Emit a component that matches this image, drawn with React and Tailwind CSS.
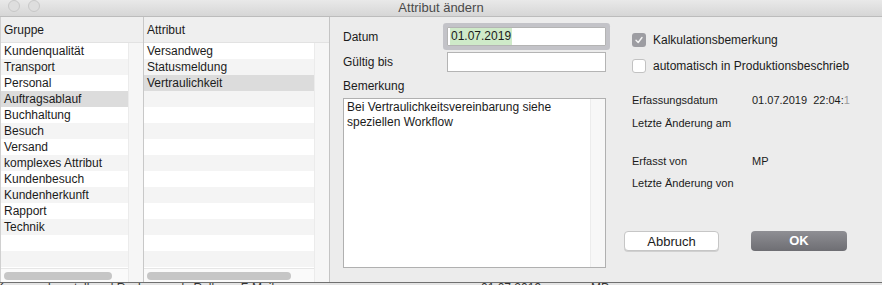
import React from "react";

const groups = [
  "Kundenqualität",
  "Transport",
  "Personal",
  "Auftragsablauf",
  "Buchhaltung",
  "Besuch",
  "Versand",
  "komplexes Attribut",
  "Kundenbesuch",
  "Kundenherkunft",
  "Rapport",
  "Technik",
  "",
  "",
  "",
];
const attrs = ["Versandweg", "Statusmeldung", "Vertraulichkeit", "", "", "", "", "", "", "", "", "", "", "", ""];

function Rows({ items, selected }) {
  return (
    <div className="flex-1 overflow-hidden">
      {items.map((t, i) => (
        <div
          key={i}
          className={
            "h-[16px] leading-[16px] pl-[3px] whitespace-nowrap " +
            (i === selected ? "bg-[#dcdcdc]" : i % 2 === 0 ? "bg-white" : "bg-[#f4f4f4]")
          }
        >
          {t}
        </div>
      ))}
    </div>
  );
}

function Gutter() {
  return <div className="w-[15px] bg-[#f6f6f6] border-l border-[#ebebeb]" />;
}

function HScroll({ thumb }) {
  return (
    <div className="h-[14px] bg-[#fafafa] border-t border-[#e6e6e6] pt-[3px] pl-[3px]">
      <div className={"h-[8px] rounded-full bg-[#c6c6c6] " + thumb} />
    </div>
  );
}

function Header({ children }) {
  return (
    <div className="h-[26px] flex items-center pl-[3px] pt-[1px] bg-[#efefef] border-b border-[#e2e2e2]">
      {children}
    </div>
  );
}

function InfoRow({ label, value, className }) {
  return (
    <div className={"flex h-[16px] items-center pl-[8px] text-[11px] " + className}>
      <div className="w-[120px]">{label}</div>
      <div className="whitespace-pre">{value}</div>
    </div>
  );
}

export default function App() {
  return (
    <div className="w-[882px] h-[285px] overflow-hidden bg-[#ececec] text-[12px] text-[#1b1b1b] font-['Liberation_Sans',Arial,sans-serif]">
      {/* Title bar */}
      <div className="h-[17px] flex items-start bg-linear-to-b from-[#e9e9e9] to-[#d6d6d6] border-b border-[#bcbcbc]">
        <div className="w-[60px] flex gap-[8px] pl-[8px]">
          <div className="w-[12px] h-[12px] rounded-full bg-[#dedede] border border-[#c8c8c8]" />
          <div className="w-[12px] h-[12px] rounded-full bg-[#dedede] border border-[#c8c8c8]" />
        </div>
        <div className="flex-1 text-center text-[13px] leading-[15px] text-[#4a4a4a]">Attribut ändern</div>
        <div className="w-[60px]" />
      </div>

      {/* Body */}
      <div className="h-[265px] flex">
        {/* Gruppe */}
        <div className="w-[144px] flex flex-col border-r border-[#c8c8c8] border-l border-l-[#d0d0d0]">
          <Header>Gruppe</Header>
          <div className="flex-1 flex min-h-0">
            <div className="flex-1 flex flex-col min-h-0">
              <Rows items={groups} selected={3} />
              <HScroll thumb="w-[108px]" />
            </div>
            <Gutter />
          </div>
        </div>

        {/* Attribut */}
        <div className="w-[186px] flex flex-col border-r border-[#c4c4c4]">
          <Header>Attribut</Header>
          <div className="flex-1 flex min-h-0">
            <div className="flex-1 flex flex-col min-h-0">
              <Rows items={attrs} selected={2} />
              <HScroll thumb="w-[144px]" />
            </div>
            <Gutter />
          </div>
        </div>

        {/* Form */}
        <div className="flex-1 flex pl-[13px]">
          <div className="w-[263px] flex flex-col">
            <div className="flex items-center h-[19px] mt-[10px]">
              <div className="w-[104px]">Datum</div>
              <div className="w-[159px] h-[19px] bg-white border border-[#b4b4b4] shadow-[0_0_0_4px_#c3c3c8] rounded-[1px] flex items-center pl-[2px]">
                <span className="bg-[#cfeac9] px-[1px] leading-[17px]">01.07.2019</span>
              </div>
            </div>
            <div className="flex items-center h-[20px] mt-[6px]">
              <div className="w-[104px]">Gültig bis</div>
              <div className="w-[159px] h-[20px] bg-white border border-[#b4b4b4]" />
            </div>
            <div className="h-[16px] leading-[16px] mt-[6px]">Bemerkung</div>
            <div className="mt-[4px] h-[170px] bg-white border border-[#b0b0b0] flex">
              <div className="flex-1 pl-[3px] pt-[1px] leading-[15px]">
                Bei Vertraulichkeitsvereinbarung siehe
                <br />
                speziellen Workflow
              </div>
              <div className="w-[15px] bg-[#f7f7f7] border-l border-[#ececec]" />
            </div>
          </div>

          <div className="ml-[18px] flex flex-col">
            <div className="flex items-center h-[14px] mt-[16px] pl-[8px] gap-[7px]">
              <div className="w-[14px] h-[14px] rounded-[3px] bg-[#9d9da2] flex items-center justify-center">
                <svg width="10" height="10" viewBox="0 0 10 10">
                  <path d="M2 5.2 L4.2 7.5 L8 2.5" fill="none" stroke="#f4f4f4" strokeWidth="1.4" strokeLinecap="round" strokeLinejoin="round" />
                </svg>
              </div>
              <span>Kalkulationsbemerkung</span>
            </div>
            <div className="flex items-center h-[14px] mt-[12px] pl-[8px] gap-[7px]">
              <div className="w-[14px] h-[14px] rounded-[3px] bg-white border border-[#c2c2c2]" />
              <span>automatisch in Produktionsbeschrieb</span>
            </div>
            <InfoRow
              className="mt-[19px]"
              label="Erfassungsdatum"
              value={
                <>
                  01.07.2019  22:04:<span className="text-[#9a9a9a]">1</span>
                </>
              }
            />
            <InfoRow className="mt-[7px]" label="Letzte Änderung am" value="" />
            <InfoRow className="mt-[22px]" label="Erfasst von" value="MP" />
            <InfoRow className="mt-[6px]" label="Letzte Änderung von" value="" />
            <div className="flex mt-[40px] gap-[32px]">
              <button className="w-[95px] h-[20px] bg-white border border-[#c6c6c6] rounded-[4px] text-[13px] text-[#1b1b1b] shadow-[0_1px_0_#d0d0d0]">
                Abbruch
              </button>
              <button className="w-[96px] h-[20px] rounded-[4px] bg-linear-to-b from-[#8f8f94] to-[#6e6e73] text-[13px] text-white font-bold">
                OK
              </button>
            </div>
          </div>
        </div>
      </div>

      {/* Window below */}
      <div className="h-[3px] border-t border-[#707070] bg-[#e4e4e4] overflow-hidden relative">
        <div className="flex text-[12px] leading-[12px] text-[#333] -mt-[1px] whitespace-nowrap">
          <span className="ml-[-4px] w-[485px]">Kommandoerstellerral Rechnung als Rolle an F-Mailen</span>
          <span className="w-[110px]">01.07.2019</span>
          <span>MP</span>
        </div>
      </div>
    </div>
  );
}
